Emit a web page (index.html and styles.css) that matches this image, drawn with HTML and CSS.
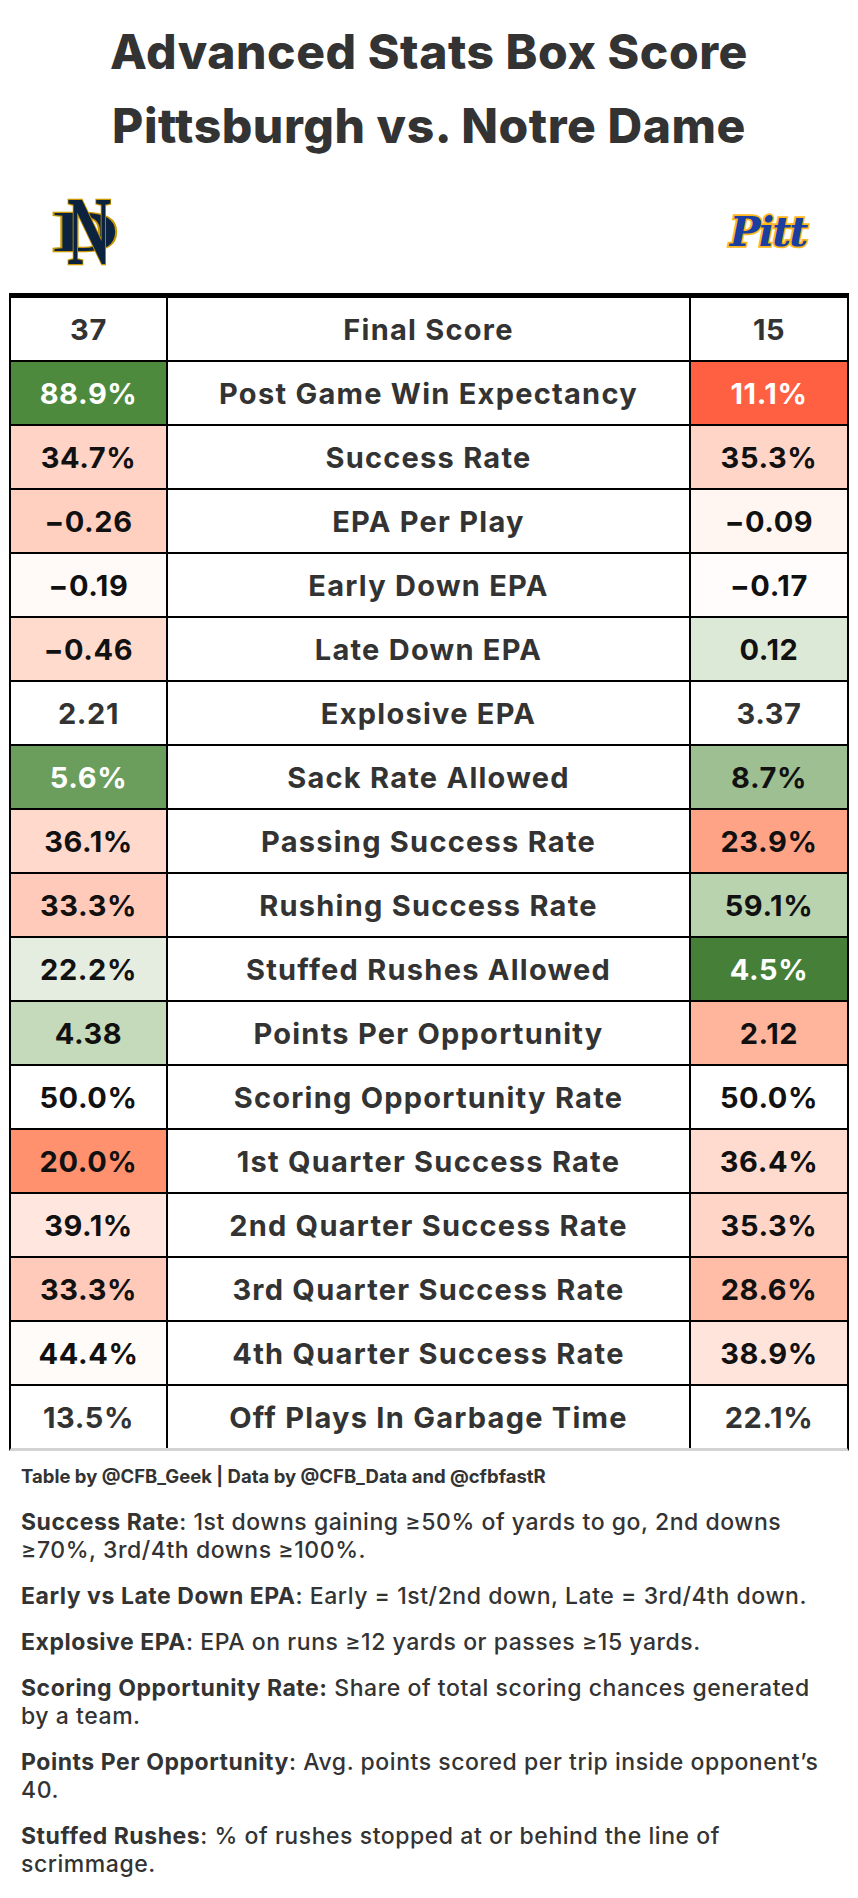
FILE: index.html
```html
<!DOCTYPE html>
<html lang="en">
<head>
<meta charset="utf-8">
<title>Advanced Stats Box Score</title>
<link rel="stylesheet" href="styles.css">
</head>
<body>
<div class="page">
  <h1 class="title">Advanced Stats Box Score<br>Pittsburgh vs. Notre Dame</h1>

  <div class="logos">
    <div class="logo-cell">
      <svg class="logo-nd" width="72" height="66" viewBox="0 0 72 66" aria-label="Notre Dame">
        <text class="nd-d" x="0" y="52" transform="scale(1.62 1)" font-size="57">D</text>
        <text class="nd-n" x="23" y="65" transform="scale(0.62 1)" font-size="98">N</text>
      </svg>
    </div>
    <div class="logo-cell"></div>
    <div class="logo-cell">
      <svg class="logo-pitt" width="76" height="42" viewBox="0 0 76 42" aria-label="Pitt">
        <text class="pitt-text" x="38" y="35" text-anchor="middle" font-size="41">Pitt</text>
      </svg>
    </div>
  </div>

  <div class="box">
    <div class="cell">37</div><div class="cell label">Final Score</div><div class="cell">15</div>

    <div class="cell on-dark" style="background:#4e8a3e">88.9%</div><div class="cell label">Post Game Win Expectancy</div><div class="cell on-dark" style="background:#ff6041">11.1%</div>

    <div class="cell ink" style="background:#ffd3c5">34.7%</div><div class="cell label">Success Rate</div><div class="cell ink" style="background:#ffd5c8">35.3%</div>

    <div class="cell ink" style="background:#ffd0c0">−0.26</div><div class="cell label">EPA Per Play</div><div class="cell ink" style="background:#fff6f2">−0.09</div>

    <div class="cell ink" style="background:#fffaf8">−0.19</div><div class="cell label">Early Down EPA</div><div class="cell ink" style="background:#fffcfb">−0.17</div>

    <div class="cell ink" style="background:#ffdbce">−0.46</div><div class="cell label">Late Down EPA</div><div class="cell ink" style="background:#dde9d7">0.12</div>

    <div class="cell">2.21</div><div class="cell label">Explosive EPA</div><div class="cell">3.37</div>

    <div class="cell on-dark" style="background:#6b9d5d">5.6%</div><div class="cell label">Sack Rate Allowed</div><div class="cell ink" style="background:#9ebf91">8.7%</div>

    <div class="cell ink" style="background:#ffd9cc">36.1%</div><div class="cell label">Passing Success Rate</div><div class="cell ink" style="background:#ffa387">23.9%</div>

    <div class="cell ink" style="background:#ffcab9">33.3%</div><div class="cell label">Rushing Success Rate</div><div class="cell ink" style="background:#bad3af">59.1%</div>

    <div class="cell ink" style="background:#e4ede0">22.2%</div><div class="cell label">Stuffed Rushes Allowed</div><div class="cell on-dark" style="background:#467f37">4.5%</div>

    <div class="cell ink" style="background:#c5dabb">4.38</div><div class="cell label">Points Per Opportunity</div><div class="cell ink" style="background:#ffb59c">2.12</div>

    <div class="cell ink" style="background:#ffffff">50.0%</div><div class="cell label">Scoring Opportunity Rate</div><div class="cell ink" style="background:#ffffff">50.0%</div>

    <div class="cell ink" style="background:#ff916f">20.0%</div><div class="cell label">1st Quarter Success Rate</div><div class="cell ink" style="background:#ffdbcf">36.4%</div>

    <div class="cell ink" style="background:#ffe7df">39.1%</div><div class="cell label">2nd Quarter Success Rate</div><div class="cell ink" style="background:#ffd5c7">35.3%</div>

    <div class="cell ink" style="background:#ffcab9">33.3%</div><div class="cell label">3rd Quarter Success Rate</div><div class="cell ink" style="background:#ffbca6">28.6%</div>

    <div class="cell ink" style="background:#fffbf9">44.4%</div><div class="cell label">4th Quarter Success Rate</div><div class="cell ink" style="background:#ffe4db">38.9%</div>

    <div class="cell">13.5%</div><div class="cell label">Off Plays In Garbage Time</div><div class="cell">22.1%</div>
  </div>

  <div class="notes">
    <p class="source">Table by @CFB_Geek | Data by @CFB_Data and @cfbfastR</p>
    <p><b>Success Rate</b>: 1st downs gaining ≥50% of yards to go, 2nd downs ≥70%, 3rd/4th downs ≥100%.</p>
    <p><b>Early vs Late Down EPA</b>: Early = 1st/2nd down, Late = 3rd/4th down.</p>
    <p><b>Explosive EPA</b>: EPA on runs ≥12 yards or passes ≥15 yards.</p>
    <p><b>Scoring Opportunity Rate:</b> Share of total scoring chances generated by a team.</p>
    <p><b>Points Per Opportunity</b>: Avg. points scored per trip inside opponent’s 40.</p>
    <p><b>Stuffed Rushes</b>: % of rushes stopped at or behind the line of scrimmage.</p>
  </div>
</div>
</body>
</html>
```

FILE: styles.css
```css
html, body {
  margin: 0;
  padding: 0;
  background: #ffffff;
}

.page {
  width: 858px;
  font-family: Inter, "Liberation Sans", Arial, sans-serif;
  color: #333333;
}

.title {
  margin: 0;
  padding: 15px 0 7px;
  text-align: center;
  font-size: 48px;
  line-height: 74px;
  font-weight: 800;
  letter-spacing: 0.55px;
  color: #333333;
}

.logos {
  margin: 0 11px;
  height: 123px;
  display: grid;
  grid-template-columns: 155px 523px 158px;
}

.logo-cell {
  display: flex;
  align-items: center;
  justify-content: center;
}

.logo-nd {
  display: block;
  overflow: visible;
}

.nd-d, .nd-n {
  font-family: "Liberation Serif", "DejaVu Serif", serif;
  font-weight: 700;
  fill: #0c2340;
  stroke: #c99700;
  stroke-width: 2.5px;
  paint-order: stroke;
}

.logo-pitt {
  display: block;
  overflow: visible;
}

.pitt-text {
  font-family: "DejaVu Serif", "Liberation Serif", serif;
  font-weight: 700;
  font-style: italic;
  letter-spacing: -2px;
  fill: #1b3fa0;
  stroke: #ffb81c;
  stroke-width: 3.5px;
  paint-order: stroke;
}

.box {
  margin: 0 9px;
  display: grid;
  grid-template-columns: 155px 521px 156px;
  grid-auto-rows: 62px;
  gap: 2px;
  background: #000000;
  border-top: 5px solid #000000;
  border-left: 2px solid #000000;
  border-right: 2px solid #000000;
  border-bottom: 3px solid #d3d3d3;
}

.cell {
  background: #ffffff;
  display: flex;
  align-items: center;
  justify-content: center;
  font-size: 29px;
  font-weight: 700;
  letter-spacing: 0.6px;
  color: #333333;
  white-space: nowrap;
}

.cell.label {
  letter-spacing: 1.25px;
}

.cell.ink {
  color: #111111;
}

.cell.on-dark {
  color: #ffffff;
}

.notes {
  padding: 11px 16px 0 21px;
  width: 812px;
  font-size: 23px;
  line-height: 28px;
  font-weight: 500;
  letter-spacing: 0.55px;
  color: #333333;
}

.notes p {
  margin: 0 0 18px;
}

.notes b {
  font-weight: 700;
}

.notes .source {
  font-size: 18.5px;
  letter-spacing: 0;
  font-weight: 700;
}
```
